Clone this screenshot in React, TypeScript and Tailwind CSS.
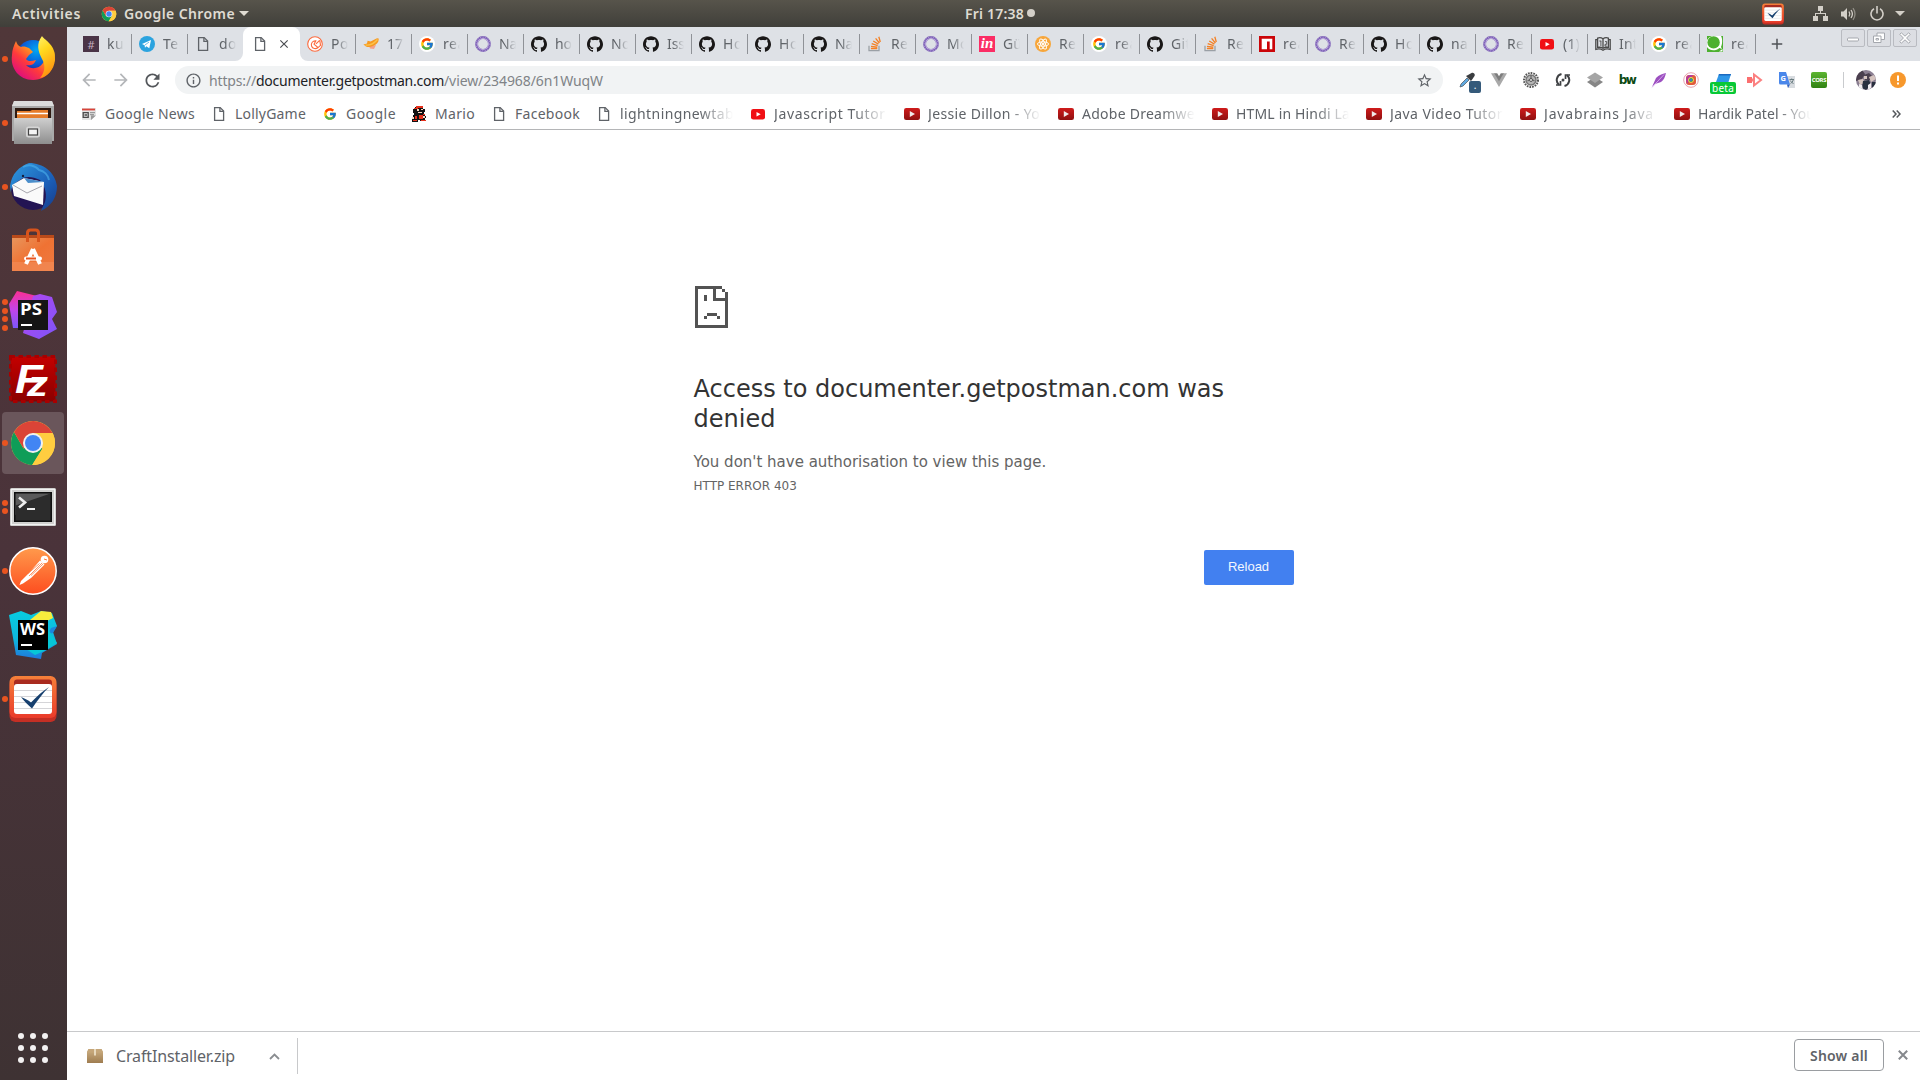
import { useLayoutEffect, useRef, useState } from "react";
import type { ReactNode } from "react";
import { FcGoogle } from "react-icons/fc";
import { MdArrowBack, MdArrowForward, MdRefresh, MdInfoOutline, MdStarBorder, MdClose, MdAdd } from "react-icons/md";

/* Text whose letter spacing is adjusted so that it spans the given width. */
function Fit({ w, children, className = "" }: { w: number; children: string; className?: string }) {
  const ref = useRef<HTMLSpanElement>(null);
  const [spacing, setSpacing] = useState(0);
  useLayoutEffect(() => {
    if (!ref.current) return;
    const natural = ref.current.getBoundingClientRect().width;
    setSpacing((w - natural) / children.length);
  }, [w, children]);
  return (
    <span ref={ref} className={`inline-block whitespace-pre ${className}`} style={{ letterSpacing: `${spacing}px` }}>
      {children}
    </span>
  );
}

/* ---------- small icons ---------- */

const Doc = () => (
  <svg width="16" height="16" viewBox="0 0 16 16" fill="none" stroke="#5f6368" strokeWidth="1.3">
    <path d="M3.6 1.6h5.6l3.4 3.4v9.4h-9z" />
    <path d="M8.9 1.8v3.6h3.6" />
  </svg>
);

const Github = () => (
  <svg width="16" height="16" viewBox="0 0 24 24" fill="#191717">
    <path d="M12 .297c-6.63 0-12 5.373-12 12 0 5.303 3.438 9.8 8.205 11.385.6.113.82-.258.82-.577 0-.285-.01-1.04-.015-2.04-3.338.724-4.042-1.61-4.042-1.61C4.422 18.07 3.633 17.7 3.633 17.7c-1.087-.744.084-.729.084-.729 1.205.084 1.838 1.236 1.838 1.236 1.07 1.835 2.809 1.305 3.495.998.108-.776.417-1.305.76-1.605-2.665-.3-5.466-1.332-5.466-5.93 0-1.31.465-2.38 1.235-3.22-.135-.303-.54-1.523.105-3.176 0 0 1.005-.322 3.3 1.23.96-.267 1.98-.399 3-.405 1.02.006 2.04.138 3 .405 2.28-1.552 3.285-1.23 3.285-1.23.645 1.653.24 2.873.12 3.176.765.84 1.23 1.91 1.23 3.22 0 4.61-2.805 5.625-5.475 5.92.42.36.81 1.096.81 2.22 0 1.606-.015 2.896-.015 3.286 0 .315.21.69.825.57C20.565 22.092 24 17.592 24 12.297c0-6.627-5.373-12-12-12" />
  </svg>
);

const Google = () => (
  <span className="flex size-4 items-center justify-center rounded-full bg-white">
    <FcGoogle size={14} />
  </span>
);

const Hex = () => (
  <svg width="16" height="16" viewBox="0 0 16 16" fill="none">
    <circle cx="8" cy="8" r="6.4" stroke="#7f62b8" strokeWidth="3" />
    <path d="M8 2.2l4.1 1.7L13.8 8l-1.7 4.1L8 13.8l-4.1-1.7L2.2 8l1.7-4.1z" stroke="#c3b3e0" strokeWidth=".9" />
    <circle cx="8" cy="8" r="7" stroke="#d8cdec" strokeWidth=".6" strokeDasharray="1 1.7" />
    <circle cx="8" cy="8" r="4.6" fill="#dee1e6" />
  </svg>
);

const Stack = () => (
  <svg width="16" height="16" viewBox="0 0 16 16" fill="none">
    <path d="M2 9.8v4.9h10V9.8" stroke="#9aa0a6" strokeWidth="1.3" />
    <g stroke="#f48024" strokeWidth="1.3">
      <path d="M3.9 12.5h6.4M4 10.3l6.3.9M4.7 7.7l6 1.9M6.2 5l5.2 3.1M8.6 2.4l3.8 4.6M11.8.8l1.5 5.2" />
    </g>
  </svg>
);

const Youtube = () => (
  <svg width="16" height="16" viewBox="0 0 16 16">
    <rect x="1" y="3" width="14" height="10.6" rx="2.4" fill="#f00f14" />
    <path d="M6.5 6l4.2 2.3-4.2 2.3z" fill="#fff" />
  </svg>
);

const YoutubeDark = () => (
  <svg width="16" height="16" viewBox="0 0 16 16">
    <defs>
      <linearGradient id="ytd" x1="0" y1="0" x2="0" y2="1">
        <stop offset="0" stopColor="#cf1b1b" />
        <stop offset="1" stopColor="#8f1010" />
      </linearGradient>
    </defs>
    <rect x="0" y="2" width="16" height="12" rx="2.2" fill="url(#ytd)" />
    <path d="M5.8 5l5.2 3-5.2 3z" fill="#f1eaea" />
  </svg>
);

const SlackHash = () => (
  <span className="flex size-4 items-center justify-center bg-[#4a3447] font-['Noto_Sans',sans-serif] text-[11px] leading-none text-[#c4aebf]">#</span>
);

const Telegram = () => (
  <svg width="16" height="16" viewBox="0 0 16 16">
    <circle cx="8" cy="8" r="8" fill="#2ba3df" />
    <path d="M3 8.1l9-4-1.7 8.2-3-2-1.3 1.5-.4-2.6z" fill="#fff" />
    <path d="M5.8 9.1l4.2-3" stroke="#2ba3df" strokeWidth=".7" />
  </svg>
);

const PostmanTab = () => (
  <svg width="16" height="16" viewBox="0 0 16 16" fill="none" stroke="#fb6b3f" strokeWidth="1.1">
    <circle cx="8" cy="8" r="7.3" fill="#fff" />
    <path d="M8.8 4.9a3.9 3.9 0 1 0 2.2 6.6L7 8.2zM9 7.9l3.6-3.6M12.8 4.2l.7 5.2-2.2 2" />
  </svg>
);

const Blimp = () => (
  <svg width="16" height="16" viewBox="0 0 16 16">
    <path d="M6 10l7-1-2 4-4-.4z" fill="#f4a28c" />
    <path d="M.4 8.6L4 7.4l.6-2.6 3 .7L14 2.3l1.6.3c.6 3-1.6 6-5.6 7.5-3 1.2-5 1.2-7 .3z" fill="#f79a22" />
    <path d="M2.5 9c4 .6 8.500-1.500 12-5.500" stroke="#fbc34c" strokeWidth="1.4" fill="none" />
  </svg>
);

const InVision = () => (
  <span className="flex size-4 items-center justify-center bg-[#fb2d65] pb-0.5 font-['Liberation_Serif',serif] text-[15px] font-bold italic leading-none text-white">in</span>
);

const ReactTab = () => (
  <svg width="16" height="16" viewBox="0 0 16 16" fill="none" stroke="#fff" strokeWidth=".9">
    <circle cx="8" cy="8" r="8" fill="#f7a63b" stroke="none" />
    <ellipse cx="8" cy="8" rx="5.6" ry="2.2" />
    <ellipse cx="8" cy="8" rx="5.6" ry="2.2" transform="rotate(60 8 8)" />
    <ellipse cx="8" cy="8" rx="5.6" ry="2.2" transform="rotate(120 8 8)" />
    <circle cx="8" cy="8" r=".9" fill="#fff" />
  </svg>
);

const Npm = () => (
  <svg width="16" height="16" viewBox="0 0 16 16">
    <path fill="#cb0509" d="M0 0h16v16H0z" />
    <path fill="#fff" d="M2.7 2.700h10.600v10.600h-2.600V5.400H8v7.900H2.700z" />
  </svg>
);

const Book = () => (
  <svg width="16" height="16" viewBox="0 0 16 16" fill="none" stroke="#4a4a4a" strokeWidth="1.3">
    <path d="M2.600 2.100c2-.7 4-.3 5.400.7 1.400-1 3.400-1.400 5.400-.7v9.400c-2-.5-4-.2-5.400.8-1.400-1-3.400-1.300-5.400-.8z" />
    <path d="M2.600 3.600H.8v9.800c3-.9 5.400-.4 7.200.8 1.800-1.200 4.200-1.700 7.200-.8V3.600h-1.800M8 2.800v9.500" />
    <path d="M4.300 5h2M5.900 5v5M10 5.600h1.700v2.700H10V10h1.700" strokeWidth=".9" />
  </svg>
);

const GreenQ = () => (
  <svg width="16" height="16" viewBox="0 0 16 16">
    <path fill="#4db02f" d="M0 0h16v16H0z" />
    <path fill="#fff" d="M0 4A8.200 8.200 0 0 1 5 0h9c1.500 2 1.600 8 0 11l1 2-2.600-1C9 15 3 15.500 0 11z" />
    <circle cx="6.600" cy="6.400" r="6.200" fill="#4db02f" />
    <path d="M12 15.500h3.500V13z" fill="#fff" />
  </svg>
);

const News = () => (
  <svg width="16" height="16" viewBox="0 0 16 16">
    <path fill="#e4e4e4" d="M1 2h14v7l-5 5H1z" />
    <path fill="#d9443a" d="M1 2.600h13v1.800H1z" />
    <path fill="#9a9a9a" d="M10 14v-4.500h5zM9 6h5v1.200H9zM9 8h4v1.200H9z" />
    <path fill="none" stroke="#4a4a4a" strokeWidth="1.300" d="M2.200 6.700h5v4.600h-5zM3.500 9h2.500" />
  </svg>
);

const Mario = () => (
  <svg width="16" height="16" viewBox="0 0 16 16" shapeRendering="crispEdges">
    <path fill="#111" d="M4 1h8v2h2v3h-1v2h1v2h1v2h-1v3H9v-1H7v2H1v-3h1V9h1V7H2V3h2z" />
    <path fill="#e5301c" d="M5 0h7v2H5zM3 2h4v1H3zM8 9h4v4H8zM4 10h2v3H4zM10 14h5v1h-5zM2 14h4v1H2zM12 8h2v1h-2z" />
    <path fill="#f6d7c4" d="M6 3h2v2H6zM10 3h2v1h-2zM7 6h4v1H7zM12 10h2v2h-2zM1 11h2v2H1z" />
  </svg>
);

const ChromeLogo = ({ size }: { size: number }) => (
  <svg width={size} height={size} viewBox="0 0 48 48">
    <circle cx="24" cy="24" r="22" fill="#ffcd40" />
    <path d="M24 24L33.500 29.500 23.200 46A22 22 0 0 1 5 13L14.500 29.500z" fill="#0f9d58" />
    <path d="M24 14h19.600A22 22 0 0 0 5 13l9.500 16.500z" fill="#db4437" />
    <path d="M24 24l9.500 5.500L23.200 46A22 22 0 0 0 43.600 14H24z" fill="#ffcd40" />
    <circle cx="24" cy="24" r="10" fill="#f1f1f1" />
    <circle cx="24" cy="24" r="8" fill="#4285f4" />
  </svg>
);

const TodoLogo = ({ size }: { size: number }) => (
  <svg width={size} height={size} viewBox="0 0 48 48">
    <defs>
      <linearGradient id="todo" x1="0" y1="0" x2="0" y2="1">
        <stop offset="0" stopColor="#f5803a" />
        <stop offset="1" stopColor="#ea3b2a" />
      </linearGradient>
    </defs>
    <rect x=".5" y="4" width="47" height="43" rx="6" fill="#c42f24" />
    <rect x=".5" y="1" width="47" height="42" rx="6" fill="url(#todo)" />
    <rect x="5" y="4.500" width="38" height="10" rx="3" fill="#a92b20" />
    <rect x="5" y="9" width="38" height="30" rx="3" fill="#fff" />
    <path d="M5 15.500h38M5 21.500h38M5 27.500h38M5 33.500h38" stroke="#d5d5d8" />
    <path d="M12 22c4 1.500 7 3 10 5.500C28 21 34 16 40 12c-6 6-12 14-17 21.500C19 30 15 26 12 22z" fill="#17406f" />
  </svg>
);

/* ---------- dock icons ---------- */

const Firefox = () => (
  <svg width="48" height="48" viewBox="0 0 48 48">
    <defs>
      <linearGradient id="ff1" x1="0.900" y1="0.100" x2="0.200" y2="0.900">
        <stop offset="0" stopColor="#ffe226" />
        <stop offset=".35" stopColor="#ff9a1f" />
        <stop offset=".65" stopColor="#ff3b3b" />
        <stop offset="1" stopColor="#e0107a" />
      </linearGradient>
      <radialGradient id="ff2" cx=".6" cy=".3" r=".7">
        <stop offset="0" stopColor="#00a6f4" />
        <stop offset=".6" stopColor="#0a5bd6" />
        <stop offset="1" stopColor="#30147c" />
      </radialGradient>
      <linearGradient id="ff3" x1="0" y1="0" x2=".3" y2="1">
        <stop offset="0" stopColor="#fff36b" />
        <stop offset=".4" stopColor="#ffd81e" />
        <stop offset="1" stopColor="#ff9411" />
      </linearGradient>
    </defs>
    <circle cx="24" cy="22" r="17" fill="url(#ff2)" />
    <path d="M7 6c1 3 2 5 5 6 3-1 5 0 8 1l4 4-4 3-3 4c2 3 6 2 10 1-2 5-6 6-10 5 5 5 13 4 17-2 5-8 2-13-1-17l12 5c3 14-5 29-21 29C10 45 1 33 3 20 3 15 5 10 7 6z" fill="url(#ff1)" />
    <path d="M33 1c3 5 14 8 13 24-1 10-8 17-15 18 6-7 5-14 2-19-4-8-6-15 0-23z" fill="url(#ff3)" />
  </svg>
);

const Files = () => (
  <svg width="48" height="48" viewBox="0 0 48 48">
    <defs>
      <linearGradient id="fl" x1="0" y1="0" x2="0" y2="1">
        <stop offset="0" stopColor="#cfcfcf" />
        <stop offset="1" stopColor="#8e8e8e" />
      </linearGradient>
    </defs>
    <path d="M5 2h38l2 5v35H3V7z" fill="#a9a9a9" />
    <path d="M5 2h38l2 5H3z" fill="#dcdcdc" />
    <path d="M6 9h36v12H6z" fill="#2e1a12" />
    <path d="M8 12h13l2-1h16v8H8z" fill="#e57c2a" />
    <path d="M8 14.500h31" stroke="#fff" strokeWidth="1.500" />
    <path d="M5 19h38v26H5z" fill="url(#fl)" />
    <rect x="17" y="27.500" width="14" height="11" rx="2.500" fill="#d5d5d5" />
    <rect x="19.500" y="30" width="9" height="6" fill="#f4f4f4" stroke="#444" strokeWidth="1.200" />
  </svg>
);

const Thunderbird = () => (
  <svg width="48" height="48" viewBox="0 0 48 48">
    <defs>
      <linearGradient id="tb" x1="0" y1="0" x2="1" y2="1">
        <stop offset="0" stopColor="#2f9be0" />
        <stop offset=".6" stopColor="#1b5fb8" />
        <stop offset="1" stopColor="#173a88" />
      </linearGradient>
    </defs>
    <circle cx="24" cy="25" r="22" fill="#231453" />
    <path d="M1 23C3 10 10 4 20 0c14 0 26 9 28 23 0 12-6 20-16 25l4-9c2-6 1-15-5-22-8-4-16-4-20 0C5 20 2 24 2 30z" fill="url(#tb)" />
    <path d="M14 4c5-3 12-2 16 3 5 1 9 5 10 10" fill="none" stroke="#4cb2ec" strokeWidth="2" opacity=".6" />
    <path d="M3 22l12-7 20 4-1 23L5 33z" fill="#fafafa" />
    <path d="M4 22l14 8 15-7" fill="none" stroke="#a7a7ad" strokeWidth="1" />
    <path d="M15 15l20 4-16 1z" fill="#4b8ecb" />
    <circle cx="14" cy="13" r="1.200" fill="#151c3b" />
  </svg>
);

const Software = () => (
  <svg width="48" height="48" viewBox="0 0 48 48">
    <defs>
      <linearGradient id="sw" x1="0" y1="0" x2="1" y2="1">
        <stop offset="0" stopColor="#e8955c" />
        <stop offset=".5" stopColor="#ef7233" />
        <stop offset="1" stopColor="#ee7a42" />
      </linearGradient>
    </defs>
    <path d="M3 8h42v4H3z" fill="#b94a1a" />
    <path d="M3 11h42v33H3z" fill="url(#sw)" />
    <path d="M3 35h42v9H3z" fill="#f28a55" opacity=".7" />
    <path d="M18.500 15V6q0-3 3-3h5q3 0 3 3v9" fill="none" stroke="#d8541c" strokeWidth="3" />
    <path d="M24 22l-7 15M24 22l7 15" stroke="#fff" strokeWidth="4" fill="none" />
    <rect x="15" y="29.500" width="18" height="4" rx="2" fill="#fff" />
    <path d="M17 31.500h10" stroke="#e95420" strokeWidth="2" />
  </svg>
);

const PhpStorm = () => (
  <svg width="48" height="48" viewBox="0 0 48 48">
    <defs>
      <linearGradient id="ps1" x1="0" y1="0" x2="0" y2="1">
        <stop offset="0" stopColor="#fb2f92" />
        <stop offset=".5" stopColor="#c344e8" />
        <stop offset="1" stopColor="#7c57fa" />
      </linearGradient>
      <linearGradient id="ps2" x1="0" y1="0" x2="1" y2="1">
        <stop offset="0" stopColor="#b646f0" />
        <stop offset="1" stopColor="#7d55f8" />
      </linearGradient>
    </defs>
    <path d="M0 13L8 0l20 5v32H4z" fill="url(#ps1)" />
    <path d="M24 5l7-2 12 3 5 15-5 7 5 10-18 10-16-6z" fill="url(#ps2)" />
    <path d="M9 9h30v30H9z" fill="#151515" />
    <text x="11" y="24" fill="#fff" fontFamily="Open Sans, sans-serif" fontWeight="700" fontSize="16" textLength="22" lengthAdjust="spacingAndGlyphs">PS</text>
    <path d="M12 33h11v2H12z" fill="#fff" />
  </svg>
);

const WebStorm = () => (
  <svg width="48" height="48" viewBox="0 0 48 48">
    <defs>
      <linearGradient id="ws1" x1="0" y1="0" x2="0" y2="1">
        <stop offset="0" stopColor="#07cbe0" />
        <stop offset=".6" stopColor="#0fb6dd" />
        <stop offset="1" stopColor="#1f78dc" />
      </linearGradient>
    </defs>
    <path d="M0 4L12 0l10 4 10-4 11 2 5 13-4 6 4 12-15 9-1 6-25-4z" fill="url(#ws1)" />
    <path d="M21 9L32 0l10 1 2 6-6 3z" fill="#f7ee3d" />
    <path d="M42 17l6-2-4 7-5 1z" fill="#1b86dc" />
    <path d="M39 18l9 14-13 8-9 4-9-6z" fill="#06c7d6" />
    <path d="M9 9h30v30H9z" fill="#000" />
    <text x="11" y="24" fill="#fff" fontFamily="Open Sans, sans-serif" fontWeight="700" fontSize="16" textLength="25" lengthAdjust="spacingAndGlyphs">WS</text>
    <path d="M12 33h11v2H12z" fill="#fff" />
  </svg>
);

const FileZilla = () => (
  <svg width="48" height="48" viewBox="0 0 48 48">
    <defs>
      <linearGradient id="fz" x1="0" y1="0" x2="0" y2="1">
        <stop offset="0" stopColor="#c40000" />
        <stop offset="1" stopColor="#8a0000" />
      </linearGradient>
    </defs>
    <rect x="1.500" y="1.500" width="45" height="45" fill="url(#fz)" />
    <rect x="1.500" y="1.500" width="45" height="45" fill="none" stroke="#a80000" strokeWidth="3" strokeDasharray="4.500 3.500" />
    <g fill="#fff" fontFamily="Liberation Sans, sans-serif" fontWeight="700" fontStyle="italic">
      <text x="6" y="38" fontSize="41" textLength="28" lengthAdjust="spacingAndGlyphs">F</text>
      <text x="18" y="41" fontSize="35" textLength="21" lengthAdjust="spacingAndGlyphs">z</text>
    </g>
  </svg>
);

const Terminal = () => (
  <svg width="48" height="48" viewBox="0 0 48 48">
    <rect x="1" y="5" width="46" height="38" rx="1.500" fill="#d0d0ce" />
    <rect x="2.500" y="6.500" width="43" height="35" fill="none" stroke="#f2f2f2" />
    <rect x="5" y="9" width="38" height="30" fill="#0f0f0f" />
    <path d="M6.500 10.500h35L6.500 32z" fill="#5a5a5a" />
    <path d="M6.500 22.500l35-12v27h-35z" fill="#2c2c2c" />
    <path d="M10 14.500l6 5-6 5" fill="none" stroke="#eee" strokeWidth="2.600" />
    <path d="M18 26h8" stroke="#eee" strokeWidth="2" />
  </svg>
);

const Postman = () => (
  <svg width="48" height="48" viewBox="0 0 48 48">
    <defs>
      <linearGradient id="pm" x1="0" y1="0" x2="0" y2="1">
        <stop offset="0" stopColor="#ff9a4c" />
        <stop offset="1" stopColor="#fd4d1f" />
      </linearGradient>
    </defs>
    <circle cx="24" cy="24" r="23.200" fill="url(#pm)" stroke="#fff" strokeWidth="1.500" />
    <circle cx="35.500" cy="12.500" r="3.800" fill="#fff" />
    <path d="M31 13.500l4.500 4L22 31l-8 5.500-3.500 1.500 1.500-4 8-8z" fill="#fff" />
    <path d="M33 16L20 29M30.500 16.500L19 26.500M34 17L22 28.500" stroke="#fd7a3c" strokeWidth=".8" />
    <path d="M35 12l3 1" stroke="#fd7a3c" />
  </svg>
);

const dockItems: { icon: ReactNode; dots: number; active?: boolean }[] = [
  { icon: <Firefox />, dots: 1 },
  { icon: <Files />, dots: 1 },
  { icon: <Thunderbird />, dots: 1 },
  { icon: <Software />, dots: 0 },
  { icon: <PhpStorm />, dots: 4 },
  { icon: <FileZilla />, dots: 0 },
  { icon: <ChromeLogo size={48} />, dots: 1, active: true },
  { icon: <Terminal />, dots: 2 },
  { icon: <Postman />, dots: 1 },
  { icon: <WebStorm />, dots: 0 },
  { icon: <TodoLogo size={48} />, dots: 1 },
];

const Dock = () => (
  <nav className="flex w-[67px] shrink-0 flex-col justify-between bg-linear-to-b from-[#503739] via-[#4a333a] to-[#3e3233]">
    <div>
      {dockItems.map((item, i) => (
        <div key={i} className="flex h-16 items-center py-px pl-0.5">
          <div className={`flex size-[62px] items-center rounded ${item.active ? "bg-[#6a565b]" : ""}`}>
            <div className="flex w-[7px] shrink-0 flex-col items-start gap-[2.5px]">
              {Array.from({ length: item.dots }, (_, d) => (
                <span key={d} className="size-1.5 rounded-full bg-[#e95420]" />
              ))}
            </div>
            {item.icon}
          </div>
        </div>
      ))}
    </div>
    <div className="mb-[17px] ml-[18px] grid w-[30px] grid-cols-3 gap-1.5">
      {Array.from({ length: 9 }, (_, i) => (
        <span key={i} className="size-1.5 rounded-full bg-[#f3f1f1]" />
      ))}
    </div>
  </nav>
);

/* ---------- top panel ---------- */

const TopPanel = () => (
  <header className="flex h-[27px] shrink-0 items-center bg-linear-to-b from-[#57544b] to-[#403f3a] font-['Noto_Sans',sans-serif] text-[14px] font-semibold text-[#dfdbd2]">
    <div className="flex w-[965px] items-center pl-3">
      <Fit w={69}>Activities</Fit>
      <span className="ml-5 mr-[7px]">
        <ChromeLogo size={16} />
      </span>
      <Fit w={111}>Google Chrome</Fit>
      <svg className="ml-1" width="10" height="5" viewBox="0 0 10 5" fill="#dfdbd2"><path d="M0 0h10L5 5z" /></svg>
    </div>
    <div className="flex w-[797px] items-center pb-px">
      <Fit w={59}>Fri 17:38</Fit>
      <span className="ml-[3px] size-2 rounded-full bg-[#d3cfc8]" />
    </div>
    <TodoLogo size={22} />
    <svg className="ml-[29px]" width="15" height="15" viewBox="0 0 15 15" fill="#d3cfc8">
      <path d="M5 0h5v5H8v2h5v3h2v5h-5v-5h2V8H3v2h2v5H0v-5h2V7h5V5H5z" />
    </svg>
    <svg className="ml-[13px]" width="16" height="14" viewBox="0 0 16 14" fill="none" stroke="#d3cfc8" strokeWidth="1.300">
      <path d="M0 4.500h2.500L6 1v12L2.500 9.500H0z" fill="#d3cfc8" stroke="none" />
      <path d="M8 4.500q1.600 2.500 0 5M10 3q2.800 4 0 8" />
      <path d="M12 1.200q4 5.800 0 11.600" opacity=".5" />
    </svg>
    <svg className="ml-[13px]" width="14" height="15" viewBox="0 0 14 15" fill="none" stroke="#d3cfc8" strokeWidth="1.600">
      <path d="M4 2.800a6 6 0 1 0 6 0M7 0v7.500" />
    </svg>
    <svg className="ml-[11px]" width="10" height="5" viewBox="0 0 10 5" fill="#d3cfc8"><path d="M0 0h10L5 5z" /></svg>
  </header>
);

/* ---------- tab strip ---------- */

type Tab = [ReactNode, string, number];
const tabs: Tab[] = [
  [<SlackHash />, "ku", 17],
  [<Telegram />, "Tel", 20],
  [<Doc />, "do", 18],
  [<Doc />, "", 0],
  [<PostmanTab />, "Po", 18],
  [<Blimp />, "17", 16],
  [<Google />, "rea", 23],
  [<Hex />, "Na", 18],
  [<Github />, "ho", 17],
  [<Github />, "No", 20],
  [<Github />, "Iss", 18],
  [<Github />, "Ho", 20],
  [<Github />, "Ho", 20],
  [<Github />, "Na", 18],
  [<Stack />, "Re", 17],
  [<Hex />, "Mo", 22],
  [<InVision />, "Gü", 19],
  [<ReactTab />, "Re", 17],
  [<Google />, "rea", 23],
  [<Github />, "Git", 20],
  [<Stack />, "Re", 17],
  [<Npm />, "rea", 23],
  [<Hex />, "Re", 17],
  [<Github />, "Ho", 20],
  [<Github />, "na", 17],
  [<Hex />, "Re", 17],
  [<Youtube />, "(1)", 17],
  [<Book />, "Int", 19],
  [<Google />, "rea", 23],
  [<GreenQ />, "rea", 23],
];

const WindowButton = ({ children }: { children: ReactNode }) => (
  <div className="flex h-[18px] w-6 items-center justify-center rounded-xs border border-[#b9bbc1] bg-[#dcdee3]">
    <svg width="12" height="12" viewBox="0 0 12 12" fill="#fff" stroke="#a4a7ad" strokeWidth="1">
      {children}
    </svg>
  </div>
);

const TabStrip = () => (
  <div className="flex h-[34px] shrink-0 bg-[#dee1e6] pl-[9px]">
    {tabs.map(([icon, title, w], i) =>
      i === 3 ? (
        <div key={i} className="relative -ml-px flex w-[57px] shrink-0 items-center gap-2 rounded-t-lg bg-white pl-[9px]">
          {icon}
          <MdClose size={14} color="#4a4d51" className="ml-px" />
          <svg className="absolute -left-2 bottom-0" width="8" height="8" viewBox="0 0 8 8" fill="#fff"><path d="M8 0v8H0a8 8 0 0 0 8-8z" /></svg>
          <svg className="absolute -right-2 bottom-0" width="8" height="8" viewBox="0 0 8 8" fill="#fff"><path d="M0 0v8h8a8 8 0 0 1-8-8z" /></svg>
        </div>
      ) : (
        <div key={i} className="flex w-14 shrink-0 items-center pl-[7px]">
          {icon}
          <div className="ml-2 w-[17px] shrink-0 overflow-hidden text-[14px] leading-5 text-[#5f6368] [mask-image:linear-gradient(to_right,black_35%,transparent)]">
            <Fit w={w}>{title}</Fit>
          </div>
          {i !== 2 && <span className="ml-[7px] h-5 w-px shrink-0 bg-[#8f9297]" />}
        </div>
      )
    )}
    <div className="flex flex-1 items-center justify-between">
      <MdAdd size={18} color="#4f5257" className="ml-[12px]" />
      <div className="mr-[3px] flex gap-0.5 self-start pt-0.5">
        <WindowButton><rect x=".5" y="6" width="11" height="3" rx="1" /></WindowButton>
        <WindowButton>
          <path d="M4 1h7.500v6.500H4z" />
          <path d="M.5 4H8v6.500H.5zM3 6.500h2.500v1.500H3z" />
        </WindowButton>
        <WindowButton><path d="M.8 2.300L2.300.8 6 4.200 9.700.8l1.500 1.500L7.600 6l3.600 3.700-1.500 1.500L6 7.800l-3.700 3.400L.8 9.700 4.400 6z" /></WindowButton>
      </div>
    </div>
  </div>
);

/* ---------- toolbar ---------- */

const Ext = ({ children }: { children: ReactNode }) => (
  <div className="relative flex w-8 shrink-0 items-center justify-center">{children}</div>
);

const Toolbar = () => (
  <div className="flex h-[38px] shrink-0 items-center bg-white pl-3">
    <MdArrowBack size={20} color="#b4b6b9" />
    <MdArrowForward size={20} color="#b4b6b9" className="ml-3" />
    <MdRefresh size={21} color="#54575b" className="ml-[11px]" />
    <div className="ml-3 flex h-7 w-[1268px] shrink-0 items-center rounded-full bg-[#f1f3f4] pl-2.5 text-[14px]">
      <MdInfoOutline size={17} color="#5f6368" />
      <span className="ml-[7px] text-[#808387]"><Fit w={47}>https://</Fit></span>
      <span className="text-[#202124]"><Fit w={188}>documenter.getpostman.com</Fit></span>
      <span className="text-[#808387]"><Fit w={159}>/view/234968/6n1WuqW</Fit></span>
      <MdStarBorder size={17} color="#5f6368" className="ml-auto mr-[10px]" />
    </div>
    <div className="ml-2 flex">
      <Ext>
        <svg width="16" height="16" viewBox="0 0 16 16"><path d="M1 15l1-3 6-6 2 2-6 6z" fill="#5fa9e0" stroke="#56606a" strokeWidth=".8" /><path d="M7 4l5 5 1.500-2 2-3c1-2-1-4-3-3L9 3z" fill="#3a3d40" /></svg>
        <span className="absolute left-[18px] top-[9px] flex h-3 w-3 items-center justify-center rounded-xs bg-[#355a7a] pb-1 text-[10px] leading-none text-white">.</span>
      </Ext>
      <Ext><svg width="16" height="16" viewBox="0 0 16 16"><path d="M0 1.200h4L8 8l4-6.800h4L8 15z" fill="#a9a9a9" /><path d="M3.200 1.200h3L8 4.200l1.800-3h3L8 9.300z" fill="#7d7d7d" /></svg></Ext>
      <Ext>
        <svg width="16" height="16" viewBox="0 0 16 16" fill="none">
          <circle cx="8" cy="8" r="7" stroke="#555" strokeWidth="2" strokeDasharray="1.700 1" />
          <circle cx="8" cy="8" r="5" fill="#b5b5b5" stroke="#777" strokeWidth="1.500" />
          <path d="M8 3v4l3.500 2M8 7l-3.500 2" stroke="#666" strokeWidth="1.200" />
          <circle cx="8" cy="8" r="1.500" fill="#eee" stroke="#555" />
        </svg>
      </Ext>
      <Ext>
        <svg width="16" height="16" viewBox="0 0 16 16" fill="none" stroke="#3f4144" strokeWidth="2">
          <path d="M6.500 2A6.200 6.200 0 0 0 4 12.800M9.500 14A6.200 6.200 0 0 0 12 3.200" />
          <path d="M1 13h4.500V9M15 3h-4.500v4" strokeWidth="1.700" />
          <circle cx="8" cy="8" r="1.500" fill="#3f4144" stroke="none" />
        </svg>
      </Ext>
      <Ext><svg width="16" height="16" viewBox="0 0 16 16"><path d="M8 5l8 5-8 5.500L0 10z" fill="#868686" /><path d="M8 .5l8 5L8 11 0 5.500z" fill="#a5a5a5" /></svg></Ext>
      <Ext><span className="font-['DejaVu_Sans',sans-serif] text-[12px] font-bold leading-none tracking-[-1.500px] text-[#0c4a12]">bw</span></Ext>
      <Ext><svg width="16" height="16" viewBox="0 0 16 16"><path d="M1 15L5 6c3-3 6-4 10-5-1 4-2 7-5 9-2 1-4 1-6 2z" fill="#9c4fc0" /><path d="M1 15.500L13 2.500" stroke="#e0bdf0" strokeWidth=".8" /></svg></Ext>
      <Ext>
        <svg width="16" height="16" viewBox="0 0 16 16" fill="none">
          <circle cx="8" cy="8" r="7.300" stroke="#e6a3b0" />
          <rect x="3" y="3" width="10" height="10" rx="3" fill="#e25a3c" />
          <path d="M3 8c0-3 1-5 5-5h2L4 12z" fill="#b43a9c" />
          <circle cx="8" cy="8" r="2.500" fill="#3b9d58" stroke="#ffd24b" />
          <circle cx="8" cy="8" r="1.100" fill="#3f78e0" />
        </svg>
      </Ext>
      <Ext>
        <svg width="16" height="16" viewBox="0 0 16 16"><path d="M4 2h12l-2.500 8H1z" fill="#2f97e8" /><path d="M4 2h12l-.5 1.500h-12z" fill="#1c6ac0" /></svg>
        <span className="absolute left-[3px] top-[10px] flex h-3 w-[26px] items-center justify-center rounded-xs bg-[#07c836] pb-px text-[10px] leading-none tracking-wide text-white">beta</span>
      </Ext>
      <Ext><svg width="16" height="16" viewBox="0 0 16 16" fill="none"><path d="M7 2.500L14 8l-7 5.500z" stroke="#fb8080" strokeWidth="2" /><path d="M0 5h5v6H0z" fill="#fb6f6f" /><path d="M5 6.500h3v3H5z" fill="#fb8080" /></svg></Ext>
      <Ext>
        <svg width="16" height="16" viewBox="0 0 16 16">
          <path d="M6 4h10v12H9z" fill="#d8dce0" />
          <path d="M0 0h7l4 12.500H1.500Q0 12.500 0 11z" fill="#4a87ea" />
          <path d="M8 12.500h3L9 16z" fill="#2c5fc4" />
          <path d="M10.500 7.500h4.500M12.700 6.500v1M14.300 7.600c-.5 2-1.500 3.200-2.800 4M11.300 8.500c.8 1.500 1.800 2.400 3.200 3" stroke="#5f7377" strokeWidth=".9" fill="none" />
          <text x="1.600" y="9" fontSize="7.500" fontWeight="700" fill="#fff" fontFamily="Open Sans, sans-serif">G</text>
        </svg>
      </Ext>
      <Ext><span className="flex size-4 items-center justify-center rounded-xs bg-linear-to-b from-[#5cb531] to-[#318212] text-[6px] font-bold leading-none tracking-[-0.300px] text-white">CORS</span></Ext>
    </div>
    <span className="ml-2 h-4 w-px bg-[#c9cbce]" />
    <svg className="ml-3" width="20" height="20" viewBox="0 0 20 20">
      <defs><clipPath id="av"><circle cx="10" cy="10" r="10" /></clipPath></defs>
      <g clipPath="url(#av)">
        <path fill="#8b7f92" d="M0 0h20v20H0z" />
        <path fill="#4a3f4e" d="M0 4l6-4 3 4-3 5-6 2zM8 5l5-2 3 3-2 4H9z" />
        <path fill="#d5c4bf" d="M8 6h3v3H8zM13 7l5-2 2 4-5 3zM2 10l5-1 2 4-5 2z" />
        <path fill="#29303f" d="M7 11l6-1 2 5-5 5-4-2zM16 12h4v5l-4 3z" />
        <path fill="#f0edf0" d="M3 14l3 1 1 5H3zM12 15l3-2v5l-3 2z" />
      </g>
    </svg>
    <svg className="ml-[14px]" width="16" height="16" viewBox="0 0 16 16"><circle cx="8" cy="8" r="8" fill="#f7982c" /><path d="M7 3.500h2V9H7zM7 10.500h2v2H7z" fill="#fff" /></svg>
  </div>
);

/* ---------- bookmarks ---------- */

const bookmarks: { icon: ReactNode; label: string; w: number; cell: string; fade?: boolean }[] = [
  { icon: <News />, label: "Google News", w: 90, cell: "w-[130px]" },
  { icon: <Doc />, label: "LollyGame", w: 71, cell: "w-[111px]" },
  { icon: <Google />, label: "Google", w: 50, cell: "w-[89px]" },
  { icon: <Mario />, label: "Mario", w: 40, cell: "w-[80px]" },
  { icon: <Doc />, label: "Facebook", w: 65, cell: "w-[105px]" },
  { icon: <Doc />, label: "lightningnewtab", w: 114, cell: "w-[154px]", fade: true },
  { icon: <Youtube />, label: "Javascript Tutori", w: 116, cell: "w-[154px]", fade: true },
  { icon: <YoutubeDark />, label: "Jessie Dillon - You", w: 121, cell: "w-[154px]", fade: true },
  { icon: <YoutubeDark />, label: "Adobe Dreamwe", w: 113, cell: "w-[154px]", fade: true },
  { icon: <YoutubeDark />, label: "HTML in Hindi La", w: 114, cell: "w-[154px]", fade: true },
  { icon: <YoutubeDark />, label: "Java Video Tutori", w: 117, cell: "w-[154px]", fade: true },
  { icon: <YoutubeDark />, label: "Javabrains Java", w: 110, cell: "w-[154px]", fade: true },
  { icon: <YoutubeDark />, label: "Hardik Patel - You", w: 117, cell: "w-[154px]", fade: true },
];

const Bookmarks = () => (
  <div className="flex h-[31px] shrink-0 items-center border-b border-[#b4b5b7] bg-white pl-[14px] text-[14px] text-[#5f6368]">
    {bookmarks.map((b) => (
      <div key={b.label} className={`flex shrink-0 items-center gap-2 ${b.cell}`}>
        <span className="shrink-0">{b.icon}</span>
        <div className={b.fade ? "w-[113px] overflow-hidden leading-5 [mask-image:linear-gradient(to_right,black_70%,transparent)]" : "leading-5"}>
          <Fit w={b.w}>{b.label}</Fit>
        </div>
      </div>
    ))}
    <svg className="ml-auto mr-[19px]" width="9" height="8" viewBox="0 0 9 8" fill="none" stroke="#55585c" strokeWidth="1.500">
      <path d="M.7.500L4 4 .7 7.500M4.700.500L8 4 4.700 7.500" />
    </svg>
  </div>
);

/* ---------- error page ---------- */

const ErrorPage = () => (
  <main className="flex-1 bg-white font-['DejaVu_Sans',sans-serif] text-[#646464]">
    <div className="mx-auto w-[600px] pt-[156px]">
      <svg className="ml-px" width="33" height="42" viewBox="0 0 11 14" fill="#535353" shapeRendering="crispEdges">
        <path d="M0 0h9v1H7v3h3v9H1V1h5v4h4v8H1v1h10V2h-1v-1H9V0H0v14h1V0z" fill="none" />
        <path d="M0 0h9v1H0zM0 0h1v14H0zM0 13h11v1H0zM10 2h1v12h-1zM6 0h1v5H6zM6 4h5v1H6zM9 1h1v1H9zM3 3h1v2H3zM4 9h3.330v1H4zM3 10h1v1H3zM7.330 10h1v1h-1z" />
      </svg>
      <h1 className="mt-[46px] text-[24px] leading-[30px] text-[#333]">Access to documenter.getpostman.com was denied</h1>
      <p className="mt-4 text-[15px] leading-6">You don't have authorisation to view this page.</p>
      <p className="text-[12px] leading-6">HTTP ERROR 403</p>
      <div className="mt-[52px] flex justify-end">
        <button className="h-[35px] w-[90px] rounded-xs bg-[#4280f0] pb-0.5 font-['Liberation_Sans',sans-serif] text-[13px] text-[#f4f7fe]">Reload</button>
      </div>
    </div>
  </main>
);

/* ---------- download shelf ---------- */

const Downloads = () => (
  <footer className="flex h-[49px] shrink-0 items-center border-t border-[#c8c9cb] bg-white text-[#5f6368]">
    <div className="flex h-9 w-[231px] shrink-0 items-center border-r border-[#c8c9cb] pl-5">
      <svg width="16" height="14" viewBox="0 0 16 14">
        <defs><linearGradient id="box" x1="0" y1="0" x2="0" y2="1"><stop offset="0" stopColor="#cdb084" /><stop offset="1" stopColor="#9f7d50" /></linearGradient></defs>
        <path d="M1.500 0h13L16 3v11H0V3z" fill="url(#box)" />
        <path d="M1.500 0h13L16 3.500H0z" fill="#c5a679" />
        <path d="M7 0h2v6.500H7z" fill="#e8d9bd" />
      </svg>
      <span className="ml-[13px] text-[16px] leading-6"><Fit w={119}>CraftInstaller.zip</Fit></span>
      <svg className="ml-[34px]" width="11" height="7" viewBox="0 0 11 7" fill="none" stroke="#8a8d91" strokeWidth="1.800"><path d="M1 6l4.500-4.500L10 6" /></svg>
    </div>
    <div className="ml-auto mr-3 flex items-center pb-0.5">
      <button className="flex h-8 w-[90px] items-center justify-center rounded border border-[#9a9da1] text-[14px] font-semibold"><Fit w={58}>Show all</Fit></button>
      <svg className="ml-3.5" width="10" height="10" viewBox="0 0 10 10" stroke="#85888c" strokeWidth="2"><path d="M.8.800l8.400 8.400M9.200.800L.8 9.200" /></svg>
    </div>
  </footer>
);

export default function App() {
  return (
    <div className="flex h-[1080px] w-[1920px] flex-col overflow-hidden bg-white">
      <TopPanel />
      <div className="flex min-h-0 flex-1">
        <Dock />
        <div className="flex min-w-0 flex-1 flex-col font-['Noto_Sans',sans-serif]">
          <TabStrip />
          <Toolbar />
          <Bookmarks />
          <ErrorPage />
          <Downloads />
        </div>
      </div>
    </div>
  );
}
